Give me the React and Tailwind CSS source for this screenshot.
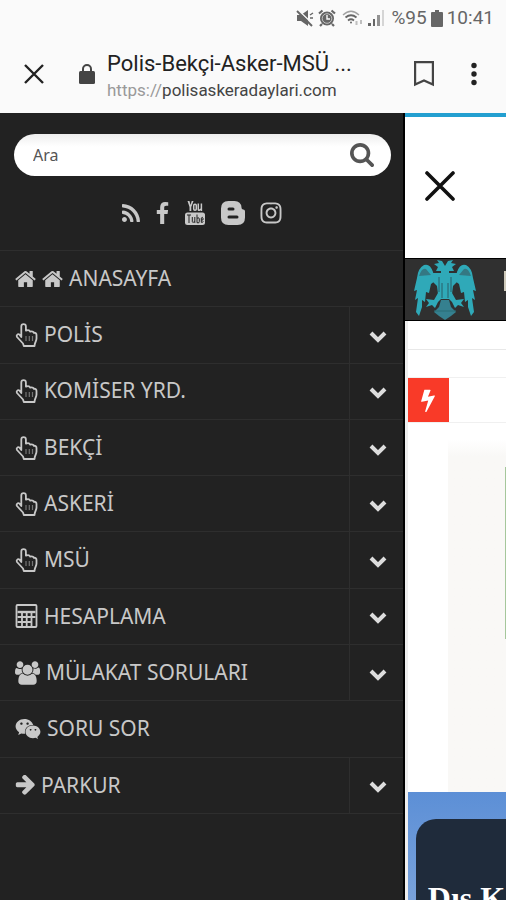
import React, { useState } from 'react';
import { FaInstagram, FaWeixin } from 'react-icons/fa';

const HomeIcon = () => (
  <svg viewBox="64 192 1664 1408" className="h-[18px] w-[21px] shrink-0" fill="currentColor" aria-hidden="true">
    <path d="M1472 992v480q0 26-19 45t-45 19h-384v-384h-256v384h-384q-26 0-45-19t-19-45v-480q0-1 .5-3t.5-3l575-474 575 474q1 2 1 6zm223-69l-62 74q-8 9-21 11h-3q-13 0-21-7l-692-577-692 577q-12 8-24 7-13-2-21-11l-62-74q-8-10-7-23.5t11-21.5l719-599q32-26 76-26t76 26l244 204v-195q0-14 9-23t23-9h192q14 0 23 9t9 23v408l219 182q10 8 11 21.5t-7 23.5z" />
  </svg>
);

const HandIcon = () => (
  <svg viewBox="0 0 22 24" className="h-6 w-[23px] shrink-0" fill="none" stroke="currentColor" strokeLinejoin="round" aria-hidden="true">
    <path
      d="M5.800 14V3.500a2.300 2.300 0 0 1 4.600 0V7.600c2-.8 3.700-.3 4.300 1 2-.5 3.200 0 3.700 1.200 1.600-.2 2.600.7 2.600 2.300v3.300c0 2-1.200 3.600-1.700 5.600l-.3 2H8.300l-.8-2.500L1.500 14c-1-1.600.6-3.600 2.500-2.400z"
      strokeWidth="1.800"
    />
    <path d="M10.500 13v5M13.800 13v5M17 13v5" strokeWidth="1.200" opacity=".5" />
  </svg>
);

const CalculatorIcon = () => (
  <svg viewBox="0 0 22 24" className="h-6 w-[23px] shrink-0" fill="none" stroke="currentColor" aria-hidden="true">
    <rect x="1" y="1" width="20" height="22" rx="1" strokeWidth="1.8" />
    <path d="M2 8h18" strokeWidth="2.400" />
    <path d="M2 13h18M2 18h14M6.500 8v15M11.200 8v15M16 8v15" strokeWidth="1.800" />
  </svg>
);

const UsersIcon = () => (
  <svg viewBox="64 0 1920 1792" className="h-6 w-[25px] shrink-0" fill="currentColor" aria-hidden="true">
    <path d="M657 896q-162 5-265 128h-134q-82 0-138-40.5t-56-118.5q0-353 124-353 6 0 43.5 21t97.5 42.5 119 21.5q67 0 133-23-5 37-5 66 0 159 93 290zm1071 637q0 120-73 189.5t-194 69.5h-874q-121 0-194-69.5t-73-189.5q0-53 3.5-103.5t14-109 26.5-108.5 43-97.5 62-81 85.5-53.5 111.5-20q10 0 43 21.5t73 48 107 48 135 21.5 135-21.5 107-48 73-48 43-21.5q61 0 111.5 20t85.5 53.5 62 81 43 97.5 26.5 108.5 14 109 3.5 103.5zm-1024-1277q0 106-75 181t-181 75-181-75-75-181 75-181 181-75 181 75 75 181zm704 384q0 159-112.5 271.5t-271.5 112.5-271.5-112.5-112.5-271.5 112.5-271.5 271.5-112.5 271.5 112.5 112.5 271.5zm576 225q0 78-56 118.5t-138 40.5h-134q-103-123-265-128 93-131 93-290 0-29-5-66 66 23 133 23 59 0 119-21.5t97.5-42.5 43.5-21q124 0 124 353zm-128-609q0 106-75 181t-181 75-181-75-75-181 75-181 181-75 181 75 75 181z" />
  </svg>
);

const ChatIcon = () => <FaWeixin className="size-[26px] shrink-0" aria-hidden="true" />;

const ArrowIcon = () => (
  <svg viewBox="64 200 1560 1560" className="size-5 shrink-0" fill="currentColor" aria-hidden="true">
    <path d="M1600 960q0 54-37 91l-651 651q-39 37-91 37-51 0-90-37l-75-75q-38-38-38-91t38-91l293-293h-704q-52 0-84.5-37.5t-32.5-90.5v-128q0-53 32.5-90.5t84.5-37.5h704l-293-294q-38-36-38-90t38-90l75-75q38-38 90-38 53 0 91 38l651 651q37 35 37 90z" />
  </svg>
);

const menuItems = [
  { label: 'ANASAYFA', icons: [HomeIcon, HomeIcon] },
  { label: 'POLİS', icons: [HandIcon], submenu: true },
  { label: 'KOMİSER YRD.', icons: [HandIcon], submenu: true },
  { label: 'BEKÇİ', icons: [HandIcon], submenu: true },
  { label: 'ASKERİ', icons: [HandIcon], submenu: true },
  { label: 'MSÜ', icons: [HandIcon], submenu: true },
  { label: 'HESAPLAMA', icons: [CalculatorIcon], submenu: true },
  { label: 'MÜLAKAT SORULARI', icons: [UsersIcon], submenu: true },
  { label: 'SORU SOR', icons: [ChatIcon] },
  { label: 'PARKUR', icons: [ArrowIcon], submenu: true },
];

const StatusBar = () => (
  <div className="flex h-9 items-center justify-end pr-3 text-[19px] text-[#666]">
    {/* Muted speaker */}
    <svg viewBox="0 0 18 18" className="mr-1 size-[18px]" aria-hidden="true">
      <path d="M1 6h4l7-5v16l-7-5H1z" fill="currentColor" />
      <path d="M14 6l3-2M14 9h3" stroke="currentColor" strokeWidth="1.400" />
      <path d="M2 1l16 15" stroke="#fafafa" strokeWidth="1.500" />
      <path d="M1 2l15 15" stroke="currentColor" strokeWidth="2" />
    </svg>
    {/* Alarm */}
    <svg viewBox="0 0 18 18" className="mr-1.5 size-[18px]" fill="none" aria-hidden="true">
      <circle cx="9" cy="9.500" r="7" fill="currentColor" />
      <circle cx="9" cy="9.500" r="4.800" stroke="#fafafa" strokeWidth="1" opacity=".6" />
      <path d="M9 6v4h3" stroke="#fafafa" strokeWidth="1.400" />
      <path d="M1 4.500L4.500 1.500M17 4.500l-3.500-3M4 15l-2 2M14 15l2 2" stroke="currentColor" strokeWidth="2.200" />
    </svg>
    <svg viewBox="0 0 22 18" className="mr-1 h-[18px] w-[22px]" fill="none" stroke="currentColor" aria-hidden="true">
      <path d="M1 6q8-7.500 16 0" strokeWidth="1.300" opacity=".6" />
      <path d="M3.500 8.500q5.500-4.500 11 0M6 11.500q3-2.500 6 0" strokeWidth="1.800" />
      <circle cx="9" cy="13.500" r="1" fill="currentColor" stroke="none" />
      <path d="M14.500 12v4M19 11v4" strokeWidth="2" opacity=".4" />
    </svg>
    <svg viewBox="0 0 17 18" className="mr-1.5 h-[18px] w-[17px]" fill="currentColor" aria-hidden="true">
      <rect x="0" y="14" width="3" height="3" />
      <rect x="5" y="10" width="2" height="7" />
      <rect x="9" y="6" width="3" height="11" opacity=".7" />
      <rect x="14" y="1" width="2" height="16" opacity=".25" />
    </svg>
    <span>%95</span>
    <svg viewBox="0 0 12 17" className="mx-1 h-[17px] w-3" fill="currentColor" aria-hidden="true">
      <path d="M4 0h4v2h3q1 0 1 1v13q0 1-1 1H1q-1 0-1-1V3q0-1 1-1h3z" />
    </svg>
    <span>10:41</span>
  </div>
);

const BrowserBar = () => (
  <div className="flex h-[77px] items-center pr-2 pb-0.5 pl-[21px]">
    <button type="button" aria-label="Kapat" className="text-[#222]">
      <svg viewBox="0 0 26 26" className="size-[26px]" fill="none" stroke="currentColor" strokeWidth="2.4">
        <path d="M4 4l18 18M22 4L4 22" />
      </svg>
    </button>
    <svg viewBox="0 0 16 20" className="ml-8 h-5 w-4 shrink-0 text-[#444]" aria-hidden="true">
      <rect y="7" width="16" height="13" rx="1.500" fill="currentColor" />
      <path d="M4 8V5a4 4 0 0 1 8 0v3" fill="none" stroke="currentColor" strokeWidth="2" />
    </svg>
    <div className="ml-3 min-w-0 flex-1 pt-1">
      <div className="truncate text-[22px] leading-7 text-[#222]">Polis-Bekçi-Asker-MSÜ ...</div>
      <div className="truncate text-[17px] leading-6 text-[#444]">
        <span className="text-[#999]">https://</span>polisaskeradaylari.com
      </div>
    </div>
    <button type="button" aria-label="Yer imi" className="mr-8 text-[#444]">
      <svg viewBox="0 0 20 26" className="h-[26px] w-5" fill="none" stroke="currentColor" strokeWidth="2.2">
        <path d="M1.100 1.100h17.800v22.500L10 19.500l-8.900 4.100z" />
      </svg>
    </button>
    <button type="button" aria-label="Menü" className="mr-4 text-[#222]">
      <svg viewBox="0 0 16 24" className="h-6 w-4" fill="currentColor">
        <circle cx="8" cy="3.500" r="2.700" />
        <circle cx="8" cy="12" r="2.700" />
        <circle cx="8" cy="20.500" r="2.700" />
      </svg>
    </button>
  </div>
);

const SocialLinks = () => (
  <div className="flex h-[74px] items-center justify-center pl-0.5 text-[#c8c8c8]">
    <a href="#rss" aria-label="RSS" className="mr-4">
      <svg viewBox="192 128 1408 1408" className="size-[18px]" fill="currentColor">
        <path d="M576 1344q0 80-56 136t-136 56-136-56-56-136 56-136 136-56 136 56 56 136zm512 123q2 28-17 48-18 21-47 21h-135q-25 0-43-16.500t-20-41.500q-22-229-184.500-391.500t-391.500-184.500q-25-2-41.500-20t-16.500-43v-135q0-29 21-47 17-17 43-17h5q160 13 306 80.500t259 181.500q114 113 181.500 259t80.500 306zm512 2q2 27-18 47-18 20-46 20h-143q-26 0-44.500-17.500t-19.500-42.500q-12-215-101-408.500t-231.500-336-336-231.500-408.500-102q-25-1-42.500-19.500t-17.500-43.500v-143q0-28 20-46 18-18 44-18h3q262 13 501.500 120t425.500 294q187 186 294 425.500t120 501.500z" />
      </svg>
    </a>
    <a href="#facebook" aria-label="Facebook" className="mr-4">
      <svg viewBox="479 0 864 1664" className="h-[22px] w-[13px]" fill="currentColor">
        <path d="M1343 12v264h-157q-86 0-116 36t-30 108v189h293l-39 296h-254v759h-306v-759h-255v-296h255v-218q0-186 104-288.500t277-102.500q147 0 228 12z" />
      </svg>
    </a>
    <a href="#youtube" aria-label="YouTube" className="mr-4">
      <svg viewBox="0 0 20 24" className="h-6 w-5" fill="currentColor">
        <path d="M2.500 0h2l1 4 1.200-4h1.800L6.300 6v4H4.500V6z" />
        <rect x="8.700" y="3.200" width="2.600" height="6" rx="1.200" fill="none" stroke="currentColor" strokeWidth="1.500" />
        <path d="M13.300 2.500v6q0 1 1 .8l1.700-1.300M16.400 2.500V10" fill="none" stroke="currentColor" strokeWidth="1.500" />
        <rect x="0" y="11.500" width="20" height="12.500" rx="2.500" />
        <path d="M2 14h4M4 14v8M7.300 16v4.500q0 1 1 .8l1.200-.8M9.800 16v6M12 13.500v8.200q2.500.8 2.300-1.200v-2.500q0-2-2.300-.8M18 20v.5q-.3 1.500-1.700.8V17q1-1.500 1.700 0v2h-1.700" fill="none" stroke="#222" strokeWidth="1" />
      </svg>
    </a>
    <a href="#blogger" aria-label="Blogger" className="mr-3.5">
      <svg viewBox="0 0 24 24" className="size-6" fill="currentColor">
        <path
          fillRule="evenodd"
          d="M7.500 0h6q6.500 0 7 6.500 0 2 1.700 2 1.800 0 1.800 1.800V16.500q0 7.500-7.500 7.500h-9Q0 24 0 16.500v-9Q0 0 7.500 0zM8 6.500a1.500 1.500 0 0 0 0 3h4a1.500 1.500 0 0 0 0-3zM8 14.500a1.500 1.500 0 0 0 0 3h8a1.500 1.500 0 0 0 0-3z"
        />
      </svg>
    </a>
    <a href="#instagram" aria-label="Instagram">
      <FaInstagram className="size-6" />
    </a>
  </div>
);

const SideMenu = () => {
  const [query, setQuery] = useState('');

  return (
    <aside className="w-4/5 shrink-0 border-r-2 border-black bg-[#222]">
      <form className="mt-[21px] mr-3 ml-[14px] flex h-[42px] items-center rounded-full bg-linear-to-b from-[#eee] via-white via-30% to-white pr-[17px] pl-[19px]" onSubmit={(e) => e.preventDefault()}>
        <input
          type="text"
          aria-label="Ara"
          placeholder="Ara"
          value={query}
          onChange={(e) => setQuery(e.target.value)}
          className="min-w-0 flex-1 text-[16px] text-[#444] outline-none placeholder:text-[#555]"
        />
        <button type="submit" aria-label="Ara" className="text-[#555]">
          <svg viewBox="64 128 1664 1664" className="size-6" fill="currentColor">
            <path d="M1216 832q0-185-131.500-316.500t-316.500-131.500-316.500 131.500-131.500 316.500 131.500 316.500 316.500 131.500 316.500-131.500 131.500-316.500zm512 832q0 52-38 90t-90 38q-54 0-90-38l-343-342q-179 124-399 124-143 0-273.500-55.500t-225-150-150-225-55.500-273.500 55.500-273.500 150-225 225-150 273.500-55.500 273.500 55.500 225 150 150 225 55.500 273.500q0 220-124 399l343 343q37 37 37 90z" />
          </svg>
        </button>
      </form>
      <SocialLinks />
      <nav>
        <ul className="grid h-[564px] auto-rows-fr border-b border-[#2e2e2e] text-[#c8c8c8]">
          {menuItems.map(({ label, icons, submenu }) => (
            <li key={label} className="flex border-t border-[#2e2e2e]">
              <a href="#menu" className="flex flex-1 items-center gap-1.5 pl-[15px] text-[21px]">
                {icons.map((Icon, i) => (
                  <Icon key={i} />
                ))}
                <span>{label}</span>
              </a>
              {submenu && (
                <button type="button" aria-label={`${label} alt menü`} className="flex w-[54px] items-center justify-center border-l border-[#2e2e2e] pt-1 pl-1 text-[#ddd]">
                  <svg viewBox="0 0 18 12" className="h-3 w-[18px]" fill="none" stroke="currentColor" strokeWidth="4">
                    <path d="M2 2l7 7 7-7" />
                  </svg>
                </button>
              )}
            </li>
          ))}
        </ul>
      </nav>
    </aside>
  );
};

// Double-headed eagle emblem
const EagleLogo = () => (
  <svg viewBox="0 0 64 62" className="h-[62px] w-16 shrink-0" aria-label="Logo" role="img">
    <g fill="#2fa9b8">
      <path d="M20 13Q17 4 11 6 5 9 4 19L1 32l3-1-2 10 3-2-2 14 3 4 3-9 0-7 3 2 1-10 3 1 2-9 4-3z" />
      <path d="M44 13q3-9 9-7 6 3 7 13l3 13-3-1 2 10-3-2 2 14-3 4-3-9 0-7-3 2-1-10-3 1-2-9-4-3z" />
      <path d="M32 7l-3-5-5-1 2 3-5 1 4 3-2 4 5 0v3h8v-3l5 0-2-4 4-3-5-1 2-3-5 1z" />
      <path d="M20 14h24l0 9-4 4-1 8-3 5h-8l-3-5-1-8-4-4z" />
      <path d="M25 34l-4 7-8-1 3 4-3 4 6-2 3 3 3-6 4-4zM39 34l4 7 8-1-3 4 3 4-6-2-3 3-3-6-4-4z" />
    </g>
    <path d="M28 41h8l2 7 5 5-5 4-6 4-6-4-5-4 5-5z" fill="#35808f" />
    <path d="M26 18v15M38 18v15M29 24v15M35 24v15M21 52h22" fill="none" stroke="#2b6c76" strokeWidth="1.200" />
    <path d="M6 17q3-9 7-7l5 6zM58 17q-3-9-7-7l-5 6z" fill="#347883" />
  </svg>
);

const PageContent = () => (
  <main className="flex min-w-0 flex-1 flex-col overflow-hidden border-t-4 border-[#239fd0] bg-white">
    <div className="flex h-[141px] shrink-0 items-center pb-1 pl-5">
      <button type="button" aria-label="Menüyü kapat" className="text-[#111]">
        <svg viewBox="0 0 30 30" className="size-[30px]" fill="none" stroke="currentColor" strokeWidth="3.600" strokeLinecap="round">
          <path d="M2 2l26 26M28 2L2 28" />
        </svg>
      </button>
    </div>
    <header className="flex h-[63px] shrink-0 items-start justify-between border-y border-black bg-[#303030] pl-2">
      <EagleLogo />
      <div className="mt-3 h-5 w-0.5 bg-[#cfcabb]" />
    </header>
    <div className="flex flex-1 flex-col border-l-3 border-[#eee]">
      <div className="h-[29px] shrink-0 border-b border-[#e8e8e8]" />
      <div className="mt-[27px] flex h-[46px] shrink-0 border-y border-[#f0f0f0]">
        <div className="flex w-[41px] items-center justify-center bg-[#f93a28] text-white">
          <svg viewBox="440 0 912 1792" className="h-6 w-[14px]" preserveAspectRatio="none" fill="currentColor" aria-hidden="true">
            <path d="M1333 566q18 20 7 44l-540 1157q-13 25-42 25-4 0-14-2-17-5-25.500-19t-4.500-30l197-808-406 101q-4 1-12 1-18 0-31-11-18-15-13-39l201-825q4-14 16-23t28-9h328q19 0 32 12.500t13 29.500q0 8-5 18l-171 463 396-98q8-2 12-2 19 0 34 15z" />
          </svg>
        </div>
      </div>
      <div className="mt-4 ml-10 flex h-[353px] shrink-0 justify-end bg-linear-to-b from-white via-[#f9f8f6] via-5% to-[#f9f8f6] pt-7">
        <div className="h-[172px] w-px bg-[#a5c79b]" />
      </div>
      <section className="flex-1 bg-linear-to-b from-[#5c8fd6] to-[#7da5dc] pt-[27px] pl-2">
        <div className="h-full rounded-tl-[20px] bg-[#1f2b3b] pt-[61px] pl-3">
          <h2 className="font-['Liberation_Serif',serif] text-[32px] leading-9 font-bold whitespace-nowrap text-white">Dış K</h2>
        </div>
      </section>
    </div>
  </main>
);

const App = () => {
  return (
    <div className="flex h-screen flex-col overflow-hidden bg-[#fafafa] font-['Noto_Sans',sans-serif]">
      <div className="shrink-0 font-['Roboto',sans-serif]">
        <StatusBar />
        <BrowserBar />
      </div>
      <div className="flex min-h-0 flex-1">
        <SideMenu />
        <PageContent />
      </div>
    </div>
  );
};

export default App;
